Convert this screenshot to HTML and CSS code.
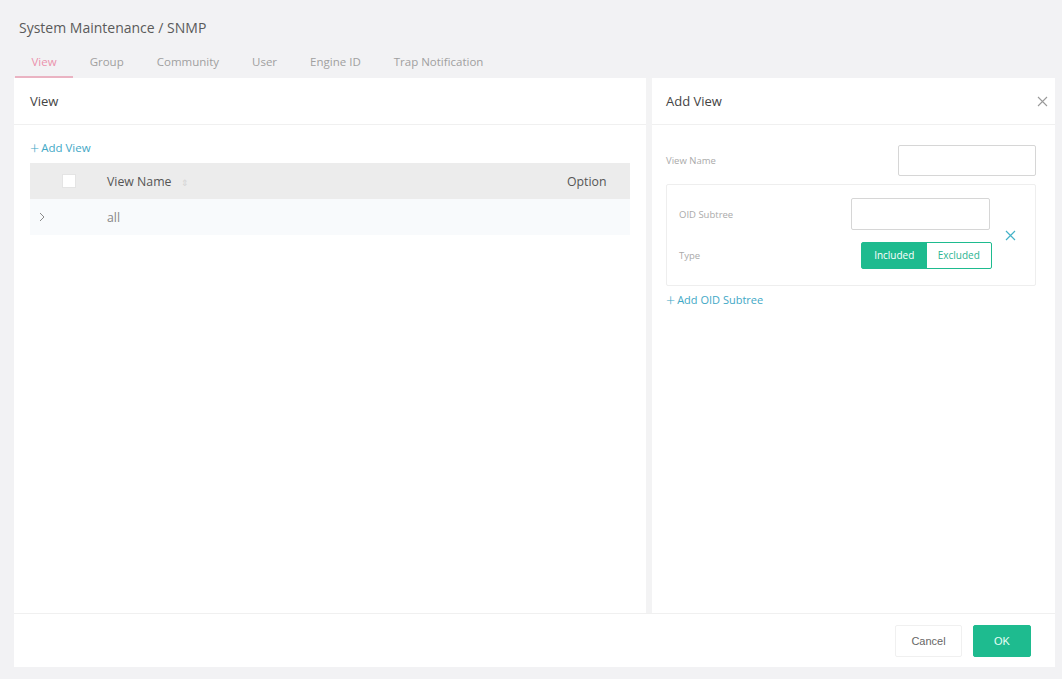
FILE: index.html
```html
<!DOCTYPE html>
<html>
<head>
<title>System Maintenance - SNMP</title>
<link rel="stylesheet" href="styles.css">
</head>
<body>
<div class="crumb">System Maintenance / SNMP</div>
<div class="tabs">
    <div class="tab active">View</div>
    <div class="tab">Group</div>
    <div class="tab">Community</div>
    <div class="tab">User</div>
    <div class="tab">Engine ID</div>
    <div class="tab">Trap Notification</div>
</div>

<div class="card">
    <div class="panes">
        <div class="left">
            <div class="pane-head">View</div>
            <div class="left-body">
                <div class="link"><span class="plus">+</span>Add View</div>
                <div class="table">
                    <div class="thead">
                        <div class="c-exp"></div>
                        <div class="c-chk"><span class="chk"></span></div>
                        <div class="c-name">View Name <span class="sort">&#8661;</span></div>
                        <div class="c-opt">Option</div>
                    </div>
                    <div class="trow">
                        <div class="c-exp">
                            <svg width="8" height="10" viewBox="0 0 8 10"><path d="M2 1l4 4-4 4" fill="none" stroke="#8a8a8a" stroke-width="1"/></svg>
                        </div>
                        <div class="c-chk"></div>
                        <div class="c-name">all</div>
                        <div class="c-opt"></div>
                    </div>
                </div>
            </div>
        </div>
        <div class="split"></div>
        <div class="right">
            <div class="pane-head drawer-head">
                <span>Add View</span>
                <svg width="11" height="11" viewBox="0 0 11 11"><path d="M1 1l9 9M10 1l-9 9" stroke="#9a9a9a" stroke-width="1.1"/></svg>
            </div>
            <div class="form">
                <div class="frow">
                    <span class="lbl">View Name</span>
                    <input class="inp" type="text">
                </div>
                <div class="oid-wrap">
                    <div class="oid-box">
                        <div class="frow">
                            <span class="lbl">OID Subtree</span>
                            <input class="inp" type="text">
                        </div>
                        <div class="frow type-row">
                            <span class="lbl">Type</span>
                            <div class="seg">
                                <span class="seg-on">Included</span>
                                <span class="seg-off">Excluded</span>
                            </div>
                        </div>
                    </div>
                    <svg class="oid-del" width="11" height="11" viewBox="0 0 11 11"><path d="M1 1l9 9M10 1l-9 9" stroke="#44b2c8" stroke-width="1.2"/></svg>
                </div>
                <div class="link small"><span class="plus">+</span>Add OID Subtree</div>
            </div>
        </div>
    </div>
    <div class="footer">
        <button class="btn">Cancel</button>
        <button class="btn ok">OK</button>
    </div>
</div>
</body>
</html>
```

FILE: styles.css
```css
body {
    margin: 0;
    background: #f2f2f4;
    font-family: "Open Sans", "Noto Sans", sans-serif;
    color: #555;
}

.crumb {
    font-size: 14px;
    color: #5a5a5a;
    padding: 18px 0 0 19px;
    height: 24px;
}

.tabs {
    display: flex;
    padding-left: 15px;
    height: 36px;
}
.tab {
    font-size: 11.5px;
    color: #a0a0a0;
    padding: 12px 16.5px 0;
    height: 22px;
}
.tab.active {
    color: #eb93ad;
    border-bottom: 2px solid #eab3c2;
}

.card {
    margin: 0 7px 12px 14px;
    background: #fff;
    height: 589px;
    display: flex;
    flex-direction: column;
}

.panes {
    display: flex;
    flex: 1;
}
.left {
    width: 632px;
}
.split {
    width: 6px;
    background: #f3f3f4;
}
.right {
    flex: 1;
}

.pane-head {
    height: 46px;
    border-bottom: 1px solid #f0f0f0;
    padding-left: 16px;
    font-size: 13px;
    color: #444;
    display: flex;
    align-items: center;
}

.left-body {
    padding: 14px 16px 0;
}
.link {
    color: #3fa8c6;
    font-size: 11.5px;
    height: 18px;
    line-height: 18px;
    margin-bottom: 6px;
    display: flex;
    align-items: center;
}
.plus {
    font-size: 16px;
    font-weight: 300;
    margin-right: 2px;
    line-height: 18px;
}
.link.small {
    font-size: 11px;
    margin-top: 5px;
}

.table {
    width: 600px;
    font-size: 12.3px;
}
.thead, .trow {
    display: flex;
    align-items: center;
    height: 36px;
}
.thead {
    background: #ececec;
    color: #555;
}
.trow {
    background: #f8fafc;
    color: #888;
}
.c-exp {
    width: 24px;
    padding-left: 8px;
    display: flex;
}
.c-chk {
    width: 45px;
}
.chk {
    display: block;
    width: 12px;
    height: 12px;
    background: #fff;
    border: 1px solid #e4e4e4;
}
.c-name {
    flex: 1;
}
.sort {
    color: #d4d4d4;
    font-size: 9px;
    margin-left: 6px;
}
.c-opt {
    width: 63px;
}

.drawer-head {
    padding-left: 14px;
    padding-right: 7px;
    justify-content: space-between;
}

.form {
    padding: 19px 19px 0 14px;
}
.frow {
    display: flex;
    justify-content: space-between;
    align-items: center;
    height: 32px;
}
.lbl {
    font-size: 9.5px;
    color: #aaa;
}
.inp {
    width: 138px;
    padding: 0;
    border: 1px solid #d6d6d6;
    border-radius: 2px;
    box-sizing: border-box;
    height: 31px;
}

.oid-wrap {
    position: relative;
    margin-top: 8px;
}
.oid-box {
    border: 1px solid #eeeeee;
    border-radius: 2px;
    padding: 13px 45px 13px 12px;
    height: 74px;
}
.oid-box .inp {
    width: 139px;
    height: 32px;
}
.type-row {
    margin-top: 11px;
    height: 28px;
}
.oid-del {
    position: absolute;
    right: 20px;
    top: 46px;
}

.seg {
    display: flex;
    height: 27px;
    width: 131px;
    font-size: 10px;
    border: 1px solid #1ebb8f;
    border-radius: 2px;
    box-sizing: border-box;
    margin-right: -2px;
}
.seg span {
    flex: 1;
    display: flex;
    align-items: center;
    justify-content: center;
}
.seg-on {
    background: #1ebb8f;
    color: #fff;
}
.seg-off {
    color: #2bb592;
}

.footer {
    height: 53px;
    border-top: 1px solid #f0f0f0;
    display: flex;
    justify-content: flex-end;
    align-items: center;
    gap: 11px;
    padding-right: 24px;
}
.btn {
    font-family: "Liberation Sans", sans-serif;
    font-size: 11px;
    height: 32px;
    width: 67px;
    background: #fff;
    border: 1px solid #f0f0f0;
    border-radius: 2px;
    color: #666;
}
.btn.ok {
    width: 58px;
    background: #1ebb8f;
    border-color: #1ebb8f;
    color: #e8fff6;
}
```
